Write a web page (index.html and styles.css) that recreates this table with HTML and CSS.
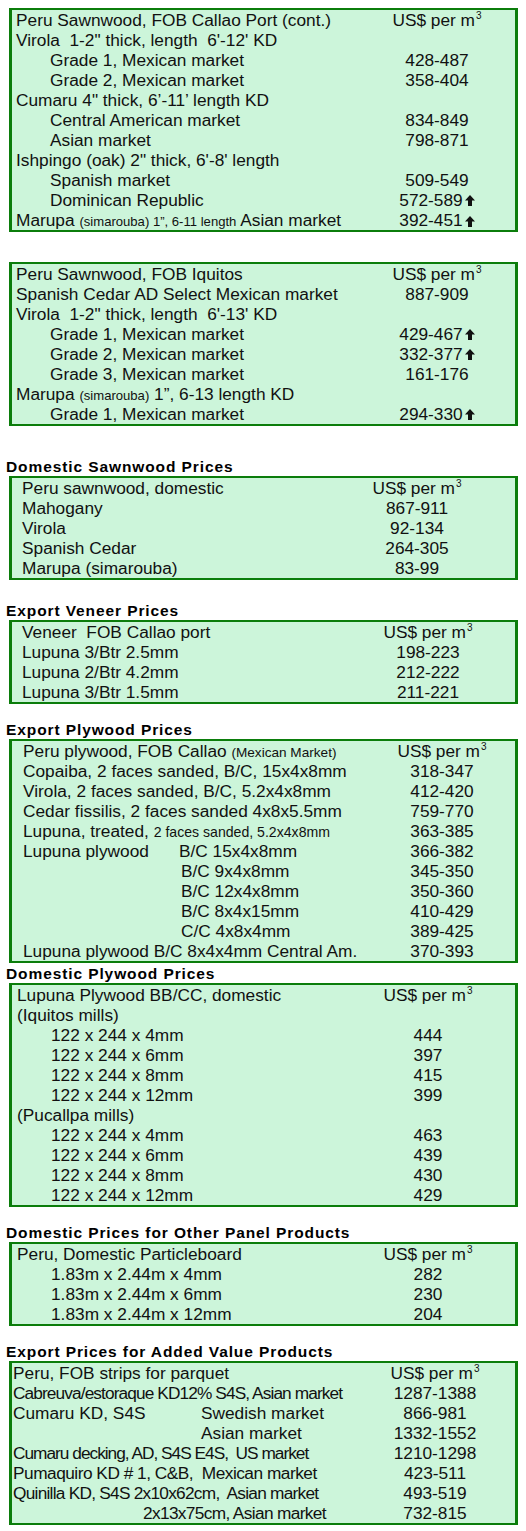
FILE: index.html
```html
<!DOCTYPE html>
<html>
<head>
<meta charset="utf-8">
<title>Peru timber prices</title>
<link rel="stylesheet" href="styles.css">
</head>
<body>
<div class="page">

<div class="box b1">
  <div class="row"><span class="lbl">Peru Sawnwood, FOB Callao Port (cont.)</span><span class="val">US$ per m<sup>3</sup></span></div>
  <div class="row"><span class="lbl">Virola&nbsp; 1-2" thick, length&nbsp; 6'-12' KD</span><span class="val"></span></div>
  <div class="row"><span class="lbl ind">Grade 1, Mexican market</span><span class="val">428-487</span></div>
  <div class="row"><span class="lbl ind">Grade 2, Mexican market</span><span class="val">358-404</span></div>
  <div class="row"><span class="lbl">Cumaru 4" thick, 6’-11’ length KD</span><span class="val"></span></div>
  <div class="row"><span class="lbl ind">Central American market</span><span class="val">834-849</span></div>
  <div class="row"><span class="lbl ind">Asian market</span><span class="val">798-871</span></div>
  <div class="row"><span class="lbl">Ishpingo (oak) 2" thick, 6'-8' length</span><span class="val"></span></div>
  <div class="row"><span class="lbl ind">Spanish market</span><span class="val">509-549</span></div>
  <div class="row"><span class="lbl ind">Dominican Republic</span><span class="val">572-589<svg class="up" viewBox="0 0 10 11"><path d="M5 0L10 5.5H7V11H3V5.5H0Z"/></svg></span></div>
  <div class="row"><span class="lbl">Marupa <small>(simarouba) 1”, 6-11 length</small> Asian market</span><span class="val">392-451<svg class="up" viewBox="0 0 10 11"><path d="M5 0L10 5.5H7V11H3V5.5H0Z"/></svg></span></div>
</div>

<div class="box b2">
  <div class="row"><span class="lbl">Peru Sawnwood, FOB Iquitos</span><span class="val">US$ per m<sup>3</sup></span></div>
  <div class="row"><span class="lbl">Spanish Cedar AD Select Mexican market</span><span class="val">887-909</span></div>
  <div class="row"><span class="lbl">Virola&nbsp; 1-2" thick, length&nbsp; 6'-13' KD</span><span class="val"></span></div>
  <div class="row"><span class="lbl ind">Grade 1, Mexican market</span><span class="val">429-467<svg class="up" viewBox="0 0 10 11"><path d="M5 0L10 5.5H7V11H3V5.5H0Z"/></svg></span></div>
  <div class="row"><span class="lbl ind">Grade 2, Mexican market</span><span class="val">332-377<svg class="up" viewBox="0 0 10 11"><path d="M5 0L10 5.5H7V11H3V5.5H0Z"/></svg></span></div>
  <div class="row"><span class="lbl ind">Grade 3, Mexican market</span><span class="val">161-176</span></div>
  <div class="row"><span class="lbl">Marupa <small>(simarouba)</small> 1”, 6-13 length KD</span><span class="val"></span></div>
  <div class="row"><span class="lbl ind">Grade 1, Mexican market</span><span class="val">294-330<svg class="up" viewBox="0 0 10 11"><path d="M5 0L10 5.5H7V11H3V5.5H0Z"/></svg></span></div>
</div>

<h3 class="hd h1">Domestic Sawnwood Prices</h3>
<div class="box b3">
  <div class="row"><span class="lbl">Peru sawnwood, domestic</span><span class="val">US$ per m<sup>3</sup></span></div>
  <div class="row"><span class="lbl">Mahogany</span><span class="val">867-911</span></div>
  <div class="row"><span class="lbl">Virola</span><span class="val">92-134</span></div>
  <div class="row"><span class="lbl">Spanish Cedar</span><span class="val">264-305</span></div>
  <div class="row"><span class="lbl">Marupa (simarouba)</span><span class="val">83-99</span></div>
</div>

<h3 class="hd h2">Export Veneer Prices</h3>
<div class="box b4">
  <div class="row"><span class="lbl">Veneer&nbsp; FOB Callao port</span><span class="val">US$ per m<sup>3</sup></span></div>
  <div class="row"><span class="lbl">Lupuna 3/Btr 2.5mm</span><span class="val">198-223</span></div>
  <div class="row"><span class="lbl">Lupuna 2/Btr 4.2mm</span><span class="val">212-222</span></div>
  <div class="row"><span class="lbl">Lupuna 3/Btr 1.5mm</span><span class="val">211-221</span></div>
</div>

<h3 class="hd h3">Export Plywood Prices</h3>
<div class="box b5">
  <div class="row"><span class="lbl">Peru plywood, FOB Callao <small class="mid">(Mexican Market)</small></span><span class="val">US$ per m<sup>3</sup></span></div>
  <div class="row"><span class="lbl">Copaiba, 2 faces sanded, B/C, 15x4x8mm</span><span class="val">318-347</span></div>
  <div class="row"><span class="lbl">Virola, 2 faces sanded, B/C, 5.2x4x8mm</span><span class="val">412-420</span></div>
  <div class="row"><span class="lbl">Cedar fissilis, 2 faces sanded 4x8x5.5mm</span><span class="val">759-770</span></div>
  <div class="row"><span class="lbl">Lupuna, treated, <small class="mid2">2 faces sanded, 5.2x4x8mm</small></span><span class="val">363-385</span></div>
  <div class="row"><span class="lbl"><span class="c1">Lupuna plywood</span><span class="sub">B/C 15x4x8mm</span></span><span class="val">366-382</span></div>
  <div class="row"><span class="lbl"><span class="c1"></span><span class="sub s2">B/C 9x4x8mm</span></span><span class="val">345-350</span></div>
  <div class="row"><span class="lbl"><span class="c1"></span><span class="sub s2">B/C 12x4x8mm</span></span><span class="val">350-360</span></div>
  <div class="row"><span class="lbl"><span class="c1"></span><span class="sub s2">B/C 8x4x15mm</span></span><span class="val">410-429</span></div>
  <div class="row"><span class="lbl"><span class="c1"></span><span class="sub s2">C/C 4x8x4mm</span></span><span class="val">389-425</span></div>
  <div class="row"><span class="lbl">Lupuna plywood B/C 8x4x4mm Central Am.</span><span class="val">370-393</span></div>
</div>

<h3 class="hd h4">Domestic Plywood Prices</h3>
<div class="box b6">
  <div class="row"><span class="lbl">Lupuna Plywood BB/CC, domestic</span><span class="val">US$ per m<sup>3</sup></span></div>
  <div class="row"><span class="lbl">(Iquitos mills)</span><span class="val"></span></div>
  <div class="row"><span class="lbl ind">122 x 244 x 4mm</span><span class="val">444</span></div>
  <div class="row"><span class="lbl ind">122 x 244 x 6mm</span><span class="val">397</span></div>
  <div class="row"><span class="lbl ind">122 x 244 x 8mm</span><span class="val">415</span></div>
  <div class="row"><span class="lbl ind">122 x 244 x 12mm</span><span class="val">399</span></div>
  <div class="row"><span class="lbl">(Pucallpa mills)</span><span class="val"></span></div>
  <div class="row"><span class="lbl ind">122 x 244 x 4mm</span><span class="val">463</span></div>
  <div class="row"><span class="lbl ind">122 x 244 x 6mm</span><span class="val">439</span></div>
  <div class="row"><span class="lbl ind">122 x 244 x 8mm</span><span class="val">430</span></div>
  <div class="row"><span class="lbl ind">122 x 244 x 12mm</span><span class="val">429</span></div>
</div>

<h3 class="hd h5">Domestic Prices for Other Panel Products</h3>
<div class="box b7">
  <div class="row"><span class="lbl">Peru, Domestic Particleboard</span><span class="val">US$ per m<sup>3</sup></span></div>
  <div class="row"><span class="lbl ind">1.83m x 2.44m x 4mm</span><span class="val">282</span></div>
  <div class="row"><span class="lbl ind">1.83m x 2.44m x 6mm</span><span class="val">230</span></div>
  <div class="row"><span class="lbl ind">1.83m x 2.44m x 12mm</span><span class="val">204</span></div>
</div>

<h3 class="hd h6">Export Prices for Added Value Products</h3>
<div class="box b8">
  <div class="row"><span class="lbl">Peru, FOB strips for parquet</span><span class="val">US$ per m<sup>3</sup></span></div>
  <div class="row"><span class="lbl tight9">Cabreuva/estoraque KD12% S4S, Asian market</span><span class="val">1287-1388</span></div>
  <div class="row"><span class="lbl"><span class="c8">Cumaru KD, S4S</span><span>Swedish market</span></span><span class="val">866-981</span></div>
  <div class="row"><span class="lbl"><span class="c8"></span><span>Asian market</span></span><span class="val">1332-1552</span></div>
  <div class="row"><span class="lbl tight10">Cumaru decking, AD, S4S E4S,&nbsp; US market</span><span class="val">1210-1298</span></div>
  <div class="row"><span class="lbl tight5">Pumaquiro KD # 1, C&amp;B,&nbsp; Mexican market</span><span class="val">423-511</span></div>
  <div class="row"><span class="lbl tight7">Quinilla KD, S4S 2x10x62cm,&nbsp; Asian market</span><span class="val">493-519</span></div>
  <div class="row"><span class="lbl tight6 q2">2x13x75cm, Asian market</span><span class="val">732-815</span></div>
</div>

</div>
</body>
</html>
```

FILE: styles.css
```css
html, body {
  margin: 0;
  padding: 0;
  background: #ffffff;
}

.page {
  width: 526px;
  padding: 8px 0 0 6px;
  box-sizing: border-box;
  font-family: "Liberation Sans", Arial, sans-serif;
  color: #111111;
}

.box {
  width: 509px;
  margin-left: 3px;
  box-sizing: border-box;
  background: #ccf5da;
  border-style: solid;
  border-color: #0b7d0b;
  border-width: 2px 3px;
  font-size: 17.3px;
}

.row {
  display: grid;
  grid-template-columns: 1fr 100px;
  height: 20px;
  line-height: 20px;
  white-space: nowrap;
}

.lbl {
  display: flex;
  align-items: baseline;
  white-space: pre;
}

.lbl.ind {
  padding-left: 34px;
}

.val {
  display: flex;
  justify-content: center;
  align-items: baseline;
}

.val sup {
  font-size: 10px;
  line-height: 10px;
  position: relative;
  top: -7px;
  margin-left: 1px;
}

.up {
  width: 10px;
  height: 11px;
  margin-left: 2px;
  fill: #111111;
  align-self: center;
}

small {
  font-size: 13.1px;
}

small.mid {
  font-size: 13.6px;
}

small.mid2 {
  font-size: 14.1px;
}

.hd {
  margin: 0;
  height: 20px;
  line-height: 22px;
  font-size: 15.5px;
  font-weight: bold;
  letter-spacing: 0.9px;
  color: #000000;
}

.h1 { margin-top: 30px; }
.h2 { margin-top: 20px; }
.h3 { margin-top: 15px; }
.h4 { margin-top: 0; }
.h5 { margin-top: 15px; }
.h6 { margin-top: 15px; }

.b2 { margin-top: 30px; }

.b1, .b2 { padding: 0 28px 0 4px; }
.b3 { padding: 0 48px 0 10px; }
.b4 { padding: 0 37px 0 10px; }
.b5 { padding: 0 23px 0 11px; }
.b6, .b7 { padding: 0 37px 0 5px; }
.b8 { padding: 0 30px 0 1px; }

.c1 {
  display: inline-block;
  width: 156px;
}

.sub.s2 { padding-left: 2px; }

.c8 {
  display: inline-block;
  width: 188px;
}

.tight9 { letter-spacing: -0.9px; }
.tight10 { letter-spacing: -1px; }
.tight5 { letter-spacing: -0.5px; }
.tight7 { letter-spacing: -0.75px; }
.tight6 { letter-spacing: -0.65px; }
.q2 { padding-left: 130px; }
```
